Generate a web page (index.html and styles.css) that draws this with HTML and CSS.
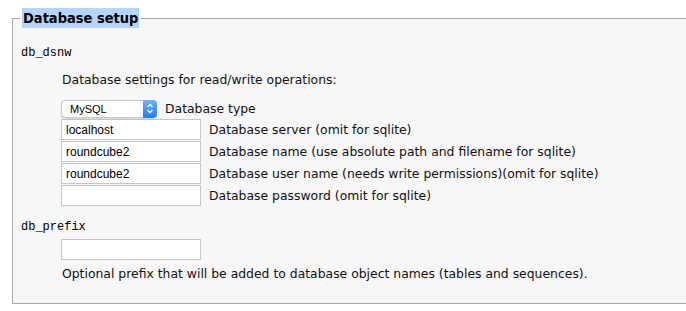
FILE: index.html
```html
<!DOCTYPE html>
<html>
<head>
<meta charset="utf-8">
<link rel="stylesheet" href="styles.css">
</head>
<body>
<fieldset class="setup">
  <legend class="setup-legend"><span class="legend-text">Database setup</span></legend>

  <div class="key">db_dsnw</div>
  <div class="indent">
    <p class="desc">Database settings for read/write operations:</p>
    <div class="row row-select">
      <span class="select-wrap">
        <select class="select"><option>MySQL</option></select>
        <span class="stepper">
          <svg width="8" height="11" viewBox="0 0 8 11"><path d="M1.5 4 L4 1.5 L6.5 4 M1.5 7 L4 9.5 L6.5 7" fill="none" stroke="#fff" stroke-width="1.3"/></svg>
        </span>
      </span>
      <span class="label label-select">Database type</span>
    </div>
    <div class="row"><input class="field" type="text" value="localhost"><span class="label">Database server (omit for sqlite)</span></div>
    <div class="row"><input class="field" type="text" value="roundcube2"><span class="label">Database name (use absolute path and filename for sqlite)</span></div>
    <div class="row"><input class="field" type="text" value="roundcube2"><span class="label">Database user name (needs write permissions)(omit for sqlite)</span></div>
    <div class="row"><input class="field" type="password" value=""><span class="label">Database password (omit for sqlite)</span></div>
  </div>

  <div class="key key-second">db_prefix</div>
  <div class="indent">
    <div class="row row-prefix"><input class="field" type="text" value=""></div>
    <p class="desc desc-last">Optional prefix that will be added to database object names (tables and sequences).</p>
  </div>
</fieldset>
</body>
</html>
```

FILE: styles.css
```css
html, body {
  margin: 0;
  padding: 0;
  background: #ffffff;
}

body {
  font-family: "DejaVu Sans", "Lucida Grande", sans-serif;
  font-size: 12.4px;
  color: #111;
}

.setup {
  margin: 8px -20px 0 12px;
  padding: 0 0 21px 7px;
  border: 1px solid #a8a8a8;
  background: #f7f7f7;
}

.setup-legend {
  padding: 0 2px;
  height: 20px;
  line-height: 20px;
}

.legend-text {
  display: inline-block;
  background: #b4d5fe;
  font-family: "DejaVu Sans Condensed", "DejaVu Sans", sans-serif;
  font-stretch: condensed;
  font-weight: bold;
  font-size: 14.5px;
  line-height: 20px;
  padding: 0 1px;
  color: #000;
}

.key {
  font-family: "Liberation Mono", "Courier New", monospace;
  font-size: 12px;
  line-height: 16px;
  margin: 17px 0 0 1px;
  color: #000;
}

.key-second {
  margin-top: 13px;
}

.indent {
  margin-left: 41px;
}

.desc {
  margin: 11px 0 0 1px;
  line-height: 16px;
}

.desc-last {
  margin-top: 6px;
}

.row {
  display: flex;
  align-items: center;
  height: 21px;
  margin-top: 1px;
}

.row-select {
  height: 19px;
  margin-top: 11px;
  margin-bottom: 1px;
}

.row-prefix {
  margin-top: 4px;
}

.select-wrap {
  position: relative;
  display: inline-block;
  width: 96px;
  height: 18px;
}

.select {
  appearance: none;
  -webkit-appearance: none;
  width: 96px;
  height: 18px;
  margin: 0;
  padding: 0 0 0 8px;
  border: 1px solid #c8c8c8;
  border-radius: 4px;
  background: #fff;
  box-shadow: 0 1px 1px rgba(0,0,0,0.12);
  font-family: "Liberation Sans", Arial, sans-serif;
  font-size: 11px;
  color: #000;
}

.stepper {
  position: absolute;
  right: 0;
  top: 0;
  width: 14px;
  height: 18px;
  border-radius: 0 4px 4px 0;
  background: linear-gradient(#6cb3fa, #1f7ef5);
  display: flex;
  align-items: center;
  justify-content: center;
}

.label-select {
  margin-left: 13px;
}

.field {
  box-sizing: border-box;
  width: 140px;
  height: 21px;
  margin: 0;
  padding: 0 4px;
  border: 1px solid #c6c6c6;
  background: #fff;
  font-family: "Liberation Sans", Arial, sans-serif;
  font-size: 12px;
  color: #000;
  outline: none;
}

.label {
  margin-left: 8px;
  white-space: nowrap;
}
```
